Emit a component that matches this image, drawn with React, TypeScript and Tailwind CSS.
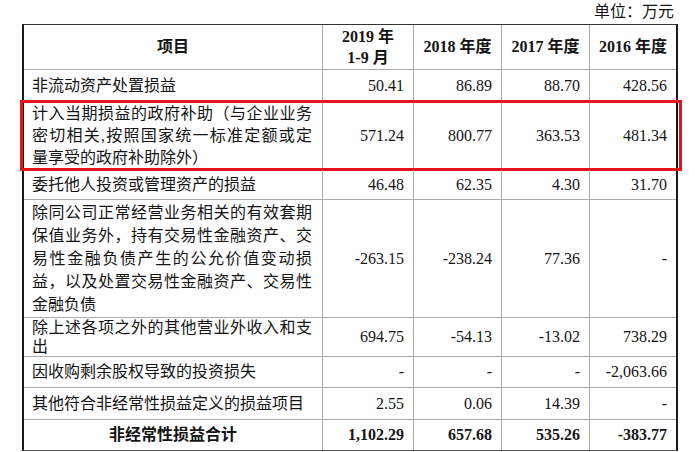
import React from "react";

const serif = "font-['Liberation_Serif','Noto_Sans_CJK_SC',serif]";

type Row = {
  lines: string[];
  vals: string[];
  h: string;
  lh: string;
  red?: boolean;
};

const rows: Row[] = [
  { lines: ["非流动资产处置损益"], vals: ["50.41", "86.89", "88.70", "428.56"], h: "h-[32px]", lh: "leading-[22px]" },
  {
    lines: ["计入当期损益的政府补助（与企业业务", "密切相关,按照国家统一标准定额或定", "量享受的政府补助除外）"],
    vals: ["571.24", "800.77", "363.53", "481.34"],
    h: "h-[68px]",
    lh: "leading-[22px]",
    red: true,
  },
  { lines: ["委托他人投资或管理资产的损益"], vals: ["46.48", "62.35", "4.30", "31.70"], h: "h-[30px]", lh: "leading-[22px]" },
  {
    lines: [
      "除同公司正常经营业务相关的有效套期",
      "保值业务外，持有交易性金融资产、交",
      "易性金融负债产生的公允价值变动损",
      "益，以及处置交易性金融资产、交易性",
      "金融负债",
    ],
    vals: ["-263.15", "-238.24", "77.36", "-"],
    h: "h-[118px]",
    lh: "leading-[23px]",
  },
  {
    lines: ["除上述各项之外的其他营业外收入和支", "出"],
    vals: ["694.75", "-54.13", "-13.02", "738.29"],
    h: "h-[39px]",
    lh: "leading-[19px]",
  },
  { lines: ["因收购剩余股权导致的投资损失"], vals: ["-", "-", "-", "-2,063.66"], h: "h-[31px]", lh: "leading-[22px]" },
  { lines: ["其他符合非经常性损益定义的损益项目"], vals: ["2.55", "0.06", "14.39", "-"], h: "h-[32px]", lh: "leading-[22px]" },
];

const grid = "grid grid-cols-[299px_91px_88px_88px_86px]";
const cellB = "border-r border-[#ababab]";

export default function App() {
  return (
    <div className={`w-[700px] h-[452px] bg-white text-[#141414] text-[16px] ${serif} pl-[22px]`}>
      <div className="w-[656px] h-[24px] flex items-center justify-end pr-[4px] leading-none">单位：万元</div>
      <div className="w-[656px] border-x-2 border-t border-b border-x-[#1a1a1a] border-t-[#333] border-b-[#555]">
        {/* header */}
        <div className={`${grid} h-[45px] border-b border-[#ababab] font-bold`}>
          <div className={`${cellB} flex items-center justify-center`}>项目</div>
          <div className={`${cellB} flex flex-col items-center justify-center leading-[21px]`}>
            <div>2019 年</div>
            <div>1-9 月</div>
          </div>
          <div className={`${cellB} flex items-center justify-center`}>2018 年度</div>
          <div className={`${cellB} flex items-center justify-center`}>2017 年度</div>
          <div className="flex items-center justify-center">2016 年度</div>
        </div>
        {rows.map((r, i) => (
          <div key={i} className={`${grid} ${r.h} border-b border-[#ababab] relative`}>
            <div className={`${cellB} pl-[8px] pr-[10px] flex flex-col justify-center ${r.lh}`}>
              {r.lines.map((l, j) => (
                <div
                  key={j}
                  className={
                    j < r.lines.length - 1
                      ? "whitespace-nowrap text-justify [text-align-last:justify]"
                      : "whitespace-nowrap"
                  }
                >
                  {l}
                </div>
              ))}
            </div>
            {r.vals.map((v, k) => (
              <div
                key={k}
                className={`${k < 3 ? cellB : ""} flex items-center justify-end pr-[9px]`}
              >
                {v}
              </div>
            ))}
            {r.red && (
              <div className="absolute left-[-4px] top-[-2px] w-[662px] h-[71px] border-[3px] border-[#e8141b] pointer-events-none" />
            )}
          </div>
        ))}
        {/* total */}
        <div className={`${grid} h-[30px] font-bold`}>
          <div className={`${cellB} flex items-center justify-center`}>非经常性损益合计</div>
          <div className={`${cellB} flex items-center justify-end pr-[9px]`}>1,102.29</div>
          <div className={`${cellB} flex items-center justify-end pr-[9px]`}>657.68</div>
          <div className={`${cellB} flex items-center justify-end pr-[9px]`}>535.26</div>
          <div className="flex items-center justify-end pr-[9px]">-383.77</div>
        </div>
      </div>
    </div>
  );
}
